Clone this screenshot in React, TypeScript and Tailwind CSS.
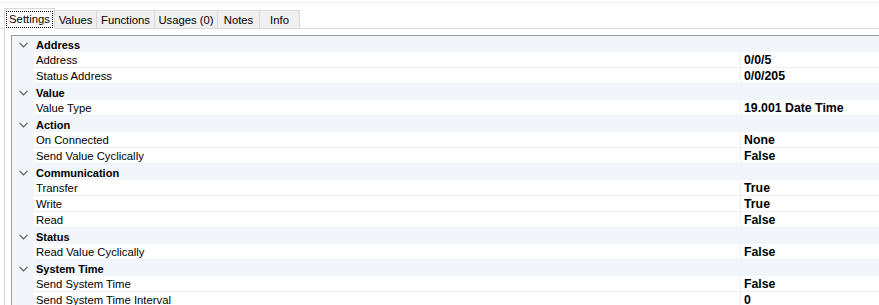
import React from 'react';

type Item = { label: string; value: string };
type Category = { name: string; items: Item[] };

const CATEGORIES: Category[] = [
  {
    name: 'Address',
    items: [
      { label: 'Address', value: '0/0/5' },
      { label: 'Status Address', value: '0/0/205' },
    ],
  },
  { name: 'Value', items: [{ label: 'Value Type', value: '19.001 Date Time' }] },
  {
    name: 'Action',
    items: [
      { label: 'On Connected', value: 'None' },
      { label: 'Send Value Cyclically', value: 'False' },
    ],
  },
  {
    name: 'Communication',
    items: [
      { label: 'Transfer', value: 'True' },
      { label: 'Write', value: 'True' },
      { label: 'Read', value: 'False' },
    ],
  },
  { name: 'Status', items: [{ label: 'Read Value Cyclically', value: 'False' }] },
  {
    name: 'System Time',
    items: [
      { label: 'Send System Time', value: 'False' },
      { label: 'Send System Time Interval', value: '0' },
    ],
  },
];

const TABS = ['Settings', 'Values', 'Functions', 'Usages (0)', 'Notes', 'Info'];
const TAB_WIDTHS = ['w-[51px]', 'w-[42px]', 'w-[58px]', 'w-[63px]', 'w-[42px]', 'w-[40px]'];

const Chevron = () => (
  <svg width="9" height="6" viewBox="0 0 9 6" className="block">
    <polyline points="0.5,0.8 4.5,4.8 8.5,0.8" fill="none" stroke="#5a5a5a" strokeWidth="1.2" />
  </svg>
);

export default function App() {
  return (
    <div className="w-[879px] h-[305px] overflow-hidden bg-white text-[11.3px] text-black [font-family:'Liberation_Sans',Arial,sans-serif]">
      <div className="h-px mt-[2px] bg-[#f1f0fa]" />

      {/* tab strip */}
      <div className="flex items-end h-[26px] pl-[4px] border-b border-[#d9d9d9]">
        {TABS.map((t, i) =>
          i === 0 ? (
            <div
              key={t}
              className={`${TAB_WIDTHS[i]} h-[21px] -mb-px bg-white border border-b-0 border-[#d9d9d9] flex items-center justify-center relative z-10`}
            >
              <span className="w-[45px] h-[15px] text-center leading-[14px] outline-1 outline-dotted outline-black">{t}</span>
            </div>
          ) : (
            <div
              key={t}
              className={`${TAB_WIDTHS[i]} h-[18px] pt-px bg-[#f0f0f0] border border-l-0 border-b-0 border-[#d9d9d9] flex items-center justify-center`}
            >
              {t}
            </div>
          )
        )}
      </div>

      {/* tab page */}
      <div className="ml-[4px] border-l border-[#d9d9d9] pl-[6px] pt-[6px] h-full">
        <div className="border-l border-t border-[#a0a0a0]">
          {CATEGORIES.map((c) => (
            <div key={c.name}>
              <div className="flex h-[16px] items-center bg-[#f2f5fa]">
                <div className="w-[22px] flex justify-center pt-[2px]">
                  <Chevron />
                </div>
                <span className="pl-[2px] pt-[2px] font-bold text-[11px]">{c.name}</span>
              </div>
              {c.items.map((it) => (
                <div key={it.label} className="flex h-[16px] bg-[#f2f5fa]">
                  <div className="w-[22px] shrink-0" />
                  <div className="flex flex-1 bg-white border-b border-[#eef0f5]">
                    <div className="w-[707px] pl-[2px] pt-[2px] leading-[13px] border-r border-[#eef0f5]">{it.label}</div>
                    <div className="pl-[3px] pt-[2px] leading-[13px] font-bold text-[12.3px]">{it.value}</div>
                  </div>
                </div>
              ))}
            </div>
          ))}
        </div>
      </div>
    </div>
  );
}
